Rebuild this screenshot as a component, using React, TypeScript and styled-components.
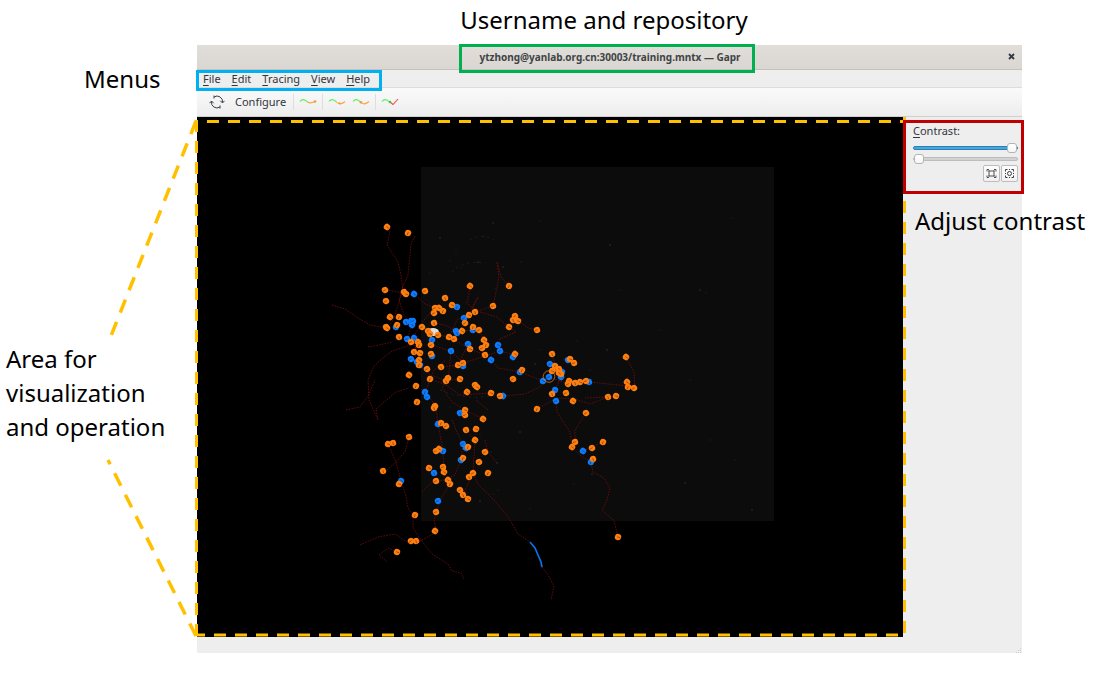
import React from "react";
import styled, { createGlobalStyle, css } from "styled-components";

const GlobalStyle = createGlobalStyle`
  * { box-sizing: border-box; }
  body {
    margin: 0;
    background: #fff;
    font-family: "Noto Sans", sans-serif;
    color: #000;
  }
`;

const ORANGE = "#ff7f0e";
const BLUE = "#0a7cff";
const GUIDE = "#ffc000";

/* ---------- figure layout ---------- */

const Figure = styled.main`
  display: grid;
  grid-template-columns: 197px minmax(0, 1fr) 94px;
  grid-template-rows: 45px auto;
`;

const Caption = styled.p`
  margin: 0;
  font-size: 24px;
  line-height: 34px;
  white-space: nowrap;
`;

const TopCaption = styled(Caption)`
  grid-column: 2;
  padding: 3px 11px 0 0;
  text-align: center;
`;

const LeftNotes = styled.div`
  grid-column: 1;
  grid-row: 2;
  position: relative;
  display: flex;
  flex-direction: column;
  gap: 246px;
  padding: 17px 0 0 6px;
`;

const MenusCaption = styled(Caption)`
  padding-left: 78px;
`;

const Connectors = styled.svg`
  position: absolute;
  top: 0;
  left: 0;
  width: 100%;
  height: 608px;
  overflow: visible;
  pointer-events: none;
`;

/* ---------- application window ---------- */

const Window = styled.section`
  grid-column: 2;
  grid-row: 2;
  display: flex;
  flex-direction: column;
  min-width: 0;
  background: #eeeeee;
  color: #31363b;
  font-size: 11px;
  line-height: 16px;
`;

const highlight = css<{ $color: string }>`
  outline: 3px solid ${(p) => p.$color};
  outline-offset: -3px;
`;

const TitleBar = styled.header`
  display: grid;
  grid-template-columns: 20px 1fr 20px;
  align-items: start;
  justify-items: center;
  height: 25px;
  background: linear-gradient(#e1deda, #dad6d1);
  border-bottom: 1px solid #c6c1bb;
`;

const Title = styled.h1<{ $color: string }>`
  ${highlight}
  position: relative;
  grid-column: 2;
  margin: -1px 5px 0 0;
  padding: 3px 14px 6px 20px;
  font-size: 10px;
  line-height: 20px;
  font-weight: 700;
  white-space: nowrap;
  color: #3d4446;
`;

const CloseButton = styled.button`
  display: flex;
  margin-right: 2px;
  padding: 8px 4px;
  border: 0;
  background: none;
`;

const MenuBar = styled.div`
  display: flex;
  height: 18px;
  border-bottom: 1px solid #dcdcdc;
`;

const MenuList = styled.nav<{ $color: string }>`
  ${highlight}
  position: relative;
  display: flex;
  align-items: center;
  gap: 11px;
  height: 21px;
  margin-left: -1px;
  padding: 0 12px 4px 7px;
`;

const MenuButton = styled.button`
  padding: 0;
  border: 0;
  background: none;
  color: inherit;
  font: inherit;
`;

const Mnemonic = styled.u`
  text-underline-offset: 2px;
`;

const Toolbar = styled.div`
  display: flex;
  align-items: center;
  height: 29px;
  padding-left: 2px;
  background: linear-gradient(#fafafa, #ededed);
  border-bottom: 1px solid #cfcfcf;
`;

const Grip = styled.span`
  width: 4px;
  height: 14px;
  margin-right: 2px;
  background: radial-gradient(circle, #c4c4c4 40%, transparent 45%) 0 0 / 2px 2px;
`;

const ToolButton = styled.button<{ $wide?: boolean }>`
  display: flex;
  align-items: center;
  justify-content: center;
  width: ${(p) => (p.$wide ? "auto" : "24px")};
  height: 24px;
  padding: ${(p) => (p.$wide ? "0 5px 0 6px" : "0")};
  border: 0;
  background: none;
  color: inherit;
  font: inherit;
`;

const Separator = styled.span`
  width: 1px;
  height: 16px;
  margin: 0 2px;
  background: #dedede;
`;

const Workspace = styled.div`
  display: grid;
  grid-template-columns: minmax(0, 1fr) 119px;
  padding-bottom: 16px;
  position: relative;
`;

const CanvasFrame = styled.div`
  position: relative;
  background: #000;
`;

const Canvas = styled.svg`
  display: block;
  width: 100%;
  height: auto;
`;

const DashFrame = styled.svg`
  position: absolute;
  top: 4px;
  left: 0;
  width: 100%;
  height: calc(100% - 5px);
  overflow: visible;
  pointer-events: none;
`;

const SidePanel = styled.aside`
  display: flex;
  flex-direction: column;
  gap: 10px;
  min-width: 0;
  padding-top: 3px;
`;

const ContrastBox = styled.div<{ $color: string }>`
  ${highlight}
  position: relative;
  display: flex;
  flex-direction: column;
  height: 74px;
  margin-right: -2px;
  padding: 3px 6px 0 10px;
`;

const Range = styled.input<{ $filled?: boolean }>`
  appearance: none;
  display: block;
  width: 100%;
  height: 11px;
  margin: 0;
  background: none;

  &::-webkit-slider-runnable-track {
    height: 4px;
    border: 1px solid ${(p) => (p.$filled ? "#2f7fb0" : "#bdbdbd")};
    border-radius: 2px;
    background: ${(p) => (p.$filled ? "#43a7e3" : "#d2d2d2")};
  }

  &::-webkit-slider-thumb {
    appearance: none;
    width: 10px;
    height: 10px;
    margin-top: -4px;
    border: 1px solid #b4b4b4;
    border-radius: 3px;
    background: linear-gradient(#fff, #f6f6f6);
  }
`;

const ContrastLabel = styled.label`
  margin-bottom: 3px;
`;

const PanelActions = styled.div`
  display: flex;
  justify-content: flex-end;
  gap: 1px;
  margin-top: 1px;
`;

const PanelButton = styled.button`
  display: flex;
  align-items: center;
  justify-content: center;
  width: 17px;
  height: 17px;
  padding: 0;
  border: 1px solid #bcbcbc;
  border-radius: 2px;
  background: linear-gradient(#fdfdfd, #f1f1f1);
`;

const SideCaption = styled(Caption)`
  padding-left: 12px;
  color: #000;
`;

const SizeGrip = styled.svg`
  position: absolute;
  right: 0;
  bottom: 0;
`;

/* ---------- tracing data ---------- */

type Point = [number, number];

const endNodes: Point[] = [
  [387, 227], [408, 233], [385, 290], [404, 292], [406, 294], [425, 291], [470, 286], [509, 286],
  [386, 301], [445, 298], [452, 305], [435, 308], [439, 308], [443, 311], [434, 313], [475, 312],
  [469, 315], [493, 306], [390, 317], [399, 317], [465, 323], [434, 323], [509, 327], [386, 327],
  [387, 328], [397, 325], [422, 327], [428, 331], [430, 334], [438, 335], [462, 331], [473, 327],
  [479, 330], [399, 337], [449, 337], [454, 339], [484, 340], [486, 345], [482, 348], [485, 355],
  [470, 349], [411, 342], [418, 342], [419, 345], [431, 345], [414, 352], [420, 353], [431, 354],
  [419, 360], [419, 365], [427, 369], [441, 367], [458, 365], [463, 363], [409, 375], [430, 379],
  [448, 378], [446, 381], [460, 379], [475, 385], [477, 387], [416, 386], [515, 316], [513, 320],
  [518, 321], [537, 330], [515, 354], [522, 370], [513, 379], [552, 354], [570, 359], [574, 363],
  [626, 357], [555, 366], [557, 369], [559, 369], [552, 371], [561, 374], [559, 373], [569, 381],
  [568, 384], [575, 383], [580, 382], [586, 381], [627, 382], [628, 387], [634, 388], [608, 397],
  [616, 396], [566, 393], [573, 401], [537, 409], [586, 413], [552, 394], [491, 393], [500, 396],
  [467, 392], [417, 402], [435, 406], [434, 408], [465, 410], [465, 415], [483, 419], [441, 423],
  [446, 426], [466, 430], [476, 429], [409, 437], [475, 440], [468, 447], [485, 452], [393, 443],
  [388, 444], [436, 451], [439, 449], [463, 458], [479, 462], [383, 471], [429, 468], [443, 467],
  [444, 472], [488, 473], [473, 473], [469, 477], [399, 484], [436, 481], [448, 480], [450, 484],
  [460, 490], [463, 495], [468, 499], [436, 512], [435, 531], [415, 515], [411, 541], [416, 541],
  [397, 552], [575, 442], [572, 447], [603, 442], [592, 448], [593, 459], [618, 537],
];

const branchNodes: Point[] = [
  [414, 294], [457, 307], [464, 318], [406, 322], [411, 321], [413, 321], [412, 325], [396, 327],
  [456, 331], [457, 333], [473, 330], [407, 339], [414, 338], [432, 340], [468, 344], [451, 351],
  [498, 345], [500, 351], [491, 360], [432, 356], [411, 359], [417, 362], [420, 365], [463, 366],
  [513, 357], [520, 372], [550, 364], [568, 360], [543, 381], [549, 377], [561, 377], [562, 372],
  [575, 383], [589, 382], [555, 390], [556, 401], [503, 396], [425, 392], [427, 397], [460, 413],
  [438, 424], [463, 444], [466, 448], [443, 451], [461, 460], [434, 473], [401, 481], [438, 501],
  [583, 451], [591, 462],
];

const traces: string[] = [
  "M390 231 L387 245 L398 262 L401 275 L403 290 L398 305 L394 318 L390 325",
  "M415 236 L411 244 L408 275 L403 286 L399 300 L404 315 L412 325",
  "M332 305 L345 309 L358 318 L370 325 L386 328",
  "M386 290 L404 293 L414 294 L425 304 L436 308",
  "M470 288 L467 303 L472 308 L478 297 L469 315 L464 318",
  "M509 286 L501 277 L497 262 L499 278 L493 306 L475 312 L457 320 L449 337",
  "M480 312 L497 317 L509 327 L516 332 L500 339 L498 345 L500 351 L515 355",
  "M518 321 L528 328 L537 330",
  "M412 325 L407 339 L418 345 L414 352 L419 365 L431 375 L446 381 L460 379",
  "M438 335 L449 337 L470 349 L485 355 L491 360 L498 368 L520 372 L543 381",
  "M434 323 L445 325 L456 331 L462 331 L473 330 L479 330 L484 340",
  "M431 345 L451 351 L463 363 L482 357 L500 351",
  "M451 351 L449 371 L448 378 L442 388 L452 402 L465 410 L475 415 L483 419",
  "M503 396 L525 394 L540 387 L549 377 L568 384 L589 382 L628 386",
  "M626 357 L634 372 L635 388 L627 382",
  "M537 409 L548 403 L556 398 L575 399 L590 404 L608 397 L585 398",
  "M556 401 L557 412 L570 432 L572 447 L581 456 L591 462 L593 472 L604 478 L610 488 L607 500 L602 510 L614 521 L618 537",
  "M603 442 L583 451 M586 413 L575 430 L575 442",
  "M552 354 L555 366 L561 377 L555 390",
  "M411 345 L392 351 L383 358 L374 366 L368 380 L369 400 L378 420 L376 409 L396 392 L409 388",
  "M346 410 L360 407 L368 396 L375 380 M368 347 L379 345 L392 342",
  "M416 386 L425 392 L436 406 L438 424 L443 451 L444 472 L450 484 L442 497 L436 512",
  "M436 512 L434 520 L437 532 L420 541 L411 541",
  "M409 437 L405 452 L396 462 L387 470 M388 444 L396 462 L401 481 L406 496 L408 508 L413 515 L413 528 L421 540",
  "M360 545 L378 537 L395 534 L410 544 L421 540 L432 554 L448 564 L452 571 L461 573 L464 579",
  "M397 552 L388 548 L379 555 L387 562",
  "M452 420 L456 430 L463 444 L461 460 L455 475 L444 480 L432 482 L422 492",
  "M466 430 L475 440 L473 473 L478 484 L495 501 L509 518 L518 534 L530 542",
  "M542 567 L548 575 L554 586 L551 600",
  "M476 400 L488 410 M485 440 L488 452 L497 463 M473 473 L463 495",
  "M430 379 L446 385 L460 395 L491 393 M425 392 L434 370 L446 360",
  "M434 308 L420 325 L411 342 L420 353 M441 367 L458 365 L468 344",
];

const specks: Point[] = [
  [440, 238], [450, 261], [461, 268], [478, 262], [484, 236], [456, 251], [493, 223], [521, 262],
  [430, 273], [503, 267], [495, 289], [540, 350], [535, 364], [577, 341], [590, 370], [607, 350],
  [480, 435], [491, 452], [497, 463], [493, 494], [498, 490], [480, 501], [530, 509], [574, 484],
  [592, 474], [620, 290], [660, 330], [700, 290], [706, 293], [690, 380], [685, 483], [711, 440],
  [735, 460], [752, 510], [640, 480], [540, 221], [610, 245], [732, 218], [450, 407], [520, 432],
];

const angles = [35, 110, 150, 75, 20, 165];

function NodeMarks({ points, color }: { points: Point[]; color: string }) {
  return (
    <g>
      {points.map(([x, y], i) => (
        <g key={i} transform={`translate(${x} ${y}) rotate(${angles[i % angles.length]})`}>
          <circle r="3.2" fill={color} />
          <path d="M-0.8 0H2.2" stroke="#3a1208" strokeOpacity="0.6" strokeWidth="0.7" />
        </g>
      ))}
    </g>
  );
}

function Tracing() {
  return (
    <Canvas viewBox="197 117 706 520" role="img" aria-label="Neuron tracing">
      <rect x="421" y="167" width="353" height="354" fill="#0c0c0c" />
      <g fill="#262626" fillOpacity="0.6">
        {specks.map(([x, y], i) => (
          <circle key={i} cx={x} cy={y} r={i % 3 ? 0.8 : 1.2} />
        ))}
      </g>
      <path d="M452 272q10-12 34-9M470 240q14-8 27 2M440 390q30 12 58 4" fill="none" stroke="#202020" strokeDasharray="2 4" />
      <g fill="none" stroke="#6a0d0d" strokeWidth="0.9" strokeDasharray="1.6 1.2">
        {traces.map((d) => (
          <path key={d} d={d} />
        ))}
      </g>
      <NodeMarks points={branchNodes} color={BLUE} />
      <ellipse cx="433" cy="332" rx="6" ry="4" fill="#dedede" />
      <NodeMarks points={endNodes} color={ORANGE} />
      <circle cx="549" cy="376.500" r="5.800" fill="none" stroke="#d8761c" strokeWidth="0.8" />
      <path d="M530 542L535 548L538 555L541 562L542 567" fill="none" stroke="#0873e6" strokeWidth="1.7" />
    </Canvas>
  );
}

/* ---------- icons ---------- */

function RefreshIcon() {
  return (
    <svg width="16" height="16" viewBox="0 0 16 16" fill="none" stroke="#3b4045" strokeWidth="1">
      <path d="M5 3A5.500 5.500 0 0 1 13.500 8.500M11 13A5.500 5.500 0 0 1 2.500 7.500" />
      <path d="M11.300 6.800L13.500 9L15.500 6.800M.5 9.200L2.500 7L4.700 9.200M5 1.500V4.500M11 11.500V14.500" />
    </svg>
  );
}

type CurveKind = "end" | "extend" | "branch" | "check";

function CurveIcon({ kind }: { kind: CurveKind }) {
  const tail = kind === "check" ? "#ee4b4b" : "#f5a54a";
  return (
    <svg width="18" height="10" viewBox="0 0 18 10" fill="none" strokeWidth="1.100">
      <path d="M1 4.500C3 1.800 5.500 2 8.500 5" stroke="#5df05d" />
      {kind === "check" ? (
        <path d="M9 5L12 7.500L17 2" stroke={tail} />
      ) : (
        <path d={kind === "end" ? "M8.500 5C10 6 13 6.200 16 4.500" : "M8.500 5C11 7.800 14 7.300 17 4.500"} stroke={tail} />
      )}
      {kind === "end" && <circle cx="16" cy="4.500" r="1.300" fill="#f59a35" />}
      {kind === "extend" && <circle cx="11.500" cy="6.200" r="1" fill="#f59a35" />}
      {kind === "branch" && <circle cx="9" cy="5.300" r="1.300" fill="#f59a35" />}
      {kind === "check" && <circle cx="9" cy="5" r="1.200" fill="#35c935" />}
    </svg>
  );
}

function FitIcon({ round }: { round?: boolean }) {
  return (
    <svg width="11" height="11" viewBox="0 0 11 11" fill="none" stroke="#3b4045">
      {round ? (
        <>
          <path d="M3.500 1.500H1.500V3.500M7.500 1.500H9.500V3.500M3.500 9.500H1.500V7.500M7.500 9.500H9.500V7.500M5 1.500H6M5 9.500H6M1.500 5V6M9.500 5V6" />
          <circle cx="5.500" cy="5.500" r="2" />
        </>
      ) : (
        <path
          d="M2.500 3H8.500M2.500 8H8.500M3 2.500V8.500M8 2.500V8.500M1 3.500V1.500H3M8 1.500H10V3.500M1 7.500V9.500H3M8 9.500H10V7.500"
          strokeWidth="0.9"
        />
      )}
    </svg>
  );
}

const menus = ["File", "Edit", "Tracing", "View", "Help"];

export default function App() {
  return (
    <>
      <GlobalStyle />
      <Figure>
        <TopCaption>Username and repository</TopCaption>

        <Window>
          <TitleBar>
            <Title $color="#00b050">ytzhong@yanlab.org.cn:30003/training.mntx — Gapr</Title>
            <CloseButton aria-label="Close">
              <svg width="7" height="7" viewBox="0 0 7 7" stroke="#33393b" strokeWidth="1.800">
                <path d="M1 1L6 6M6 1L1 6" />
              </svg>
            </CloseButton>
          </TitleBar>

          <MenuBar>
            <MenuList $color="#00b0f0">
              {menus.map((name) => (
                <MenuButton key={name}>
                  <Mnemonic>{name[0]}</Mnemonic>
                  {name.slice(1)}
                </MenuButton>
              ))}
            </MenuList>
          </MenuBar>

          <Toolbar>
            <Grip />
            <ToolButton aria-label="Refresh">
              <RefreshIcon />
            </ToolButton>
            <ToolButton $wide>Configure</ToolButton>
            <Separator />
            <ToolButton aria-label="End">
              <CurveIcon kind="end" />
            </ToolButton>
            <Separator />
            <ToolButton aria-label="Extend">
              <CurveIcon kind="extend" />
            </ToolButton>
            <ToolButton aria-label="Branch">
              <CurveIcon kind="branch" />
            </ToolButton>
            <Separator />
            <ToolButton aria-label="Check">
              <CurveIcon kind="check" />
            </ToolButton>
          </Toolbar>

          <Workspace>
            <CanvasFrame>
              <Tracing />
              <DashFrame stroke={GUIDE} strokeWidth="3" strokeDasharray="12 9">
                <line x1="0" y1="0.500" x2="100%" y2="0.500" strokeDashoffset="11" />
                <line x1="100%" y1="-4" x2="100%" y2="100%" transform="translate(1.500 0)" />
                <line x1="100%" y1="100%" x2="0" y2="100%" transform="translate(0 -1)" strokeDashoffset="16" />
                <line x1="-0.500" y1="-1" x2="-0.500" y2="100%" />
              </DashFrame>
            </CanvasFrame>
            <SidePanel>
              <ContrastBox $color="#c00000">
                <ContrastLabel htmlFor="contrast-high">
                  <Mnemonic>C</Mnemonic>ontrast:
                </ContrastLabel>
                <Range id="contrast-high" type="range" defaultValue={100} $filled />
                <Range type="range" defaultValue={0} aria-label="Contrast, lower bound" />
                <PanelActions>
                  <PanelButton aria-label="Fit range">
                    <FitIcon />
                  </PanelButton>
                  <PanelButton aria-label="Auto range">
                    <FitIcon round />
                  </PanelButton>
                </PanelActions>
              </ContrastBox>
              <SideCaption>Adjust contrast</SideCaption>
            </SidePanel>
            <SizeGrip width="6" height="6" viewBox="0 0 6 6" fill="#cfcfcf">
              <path d="M0 5h1v1H0zM2 5h1v1H2zM4 5h1v1H4zM2 3h1v1H2zM4 3h1v1H4zM4 1h1v1H4z" />
            </SizeGrip>
          </Workspace>
        </Window>

        <LeftNotes>
          <MenusCaption>Menus</MenusCaption>
          <Caption>
            Area for
            <br />
            visualization
            <br />
            and operation
          </Caption>
          <Connectors stroke={GUIDE} strokeWidth="3.5" strokeDasharray="14 10">
            <line x1="196" y1="76" x2="111" y2="291" />
            <line x1="196" y1="591" x2="108" y2="415" />
          </Connectors>
        </LeftNotes>
      </Figure>
    </>
  );
}
